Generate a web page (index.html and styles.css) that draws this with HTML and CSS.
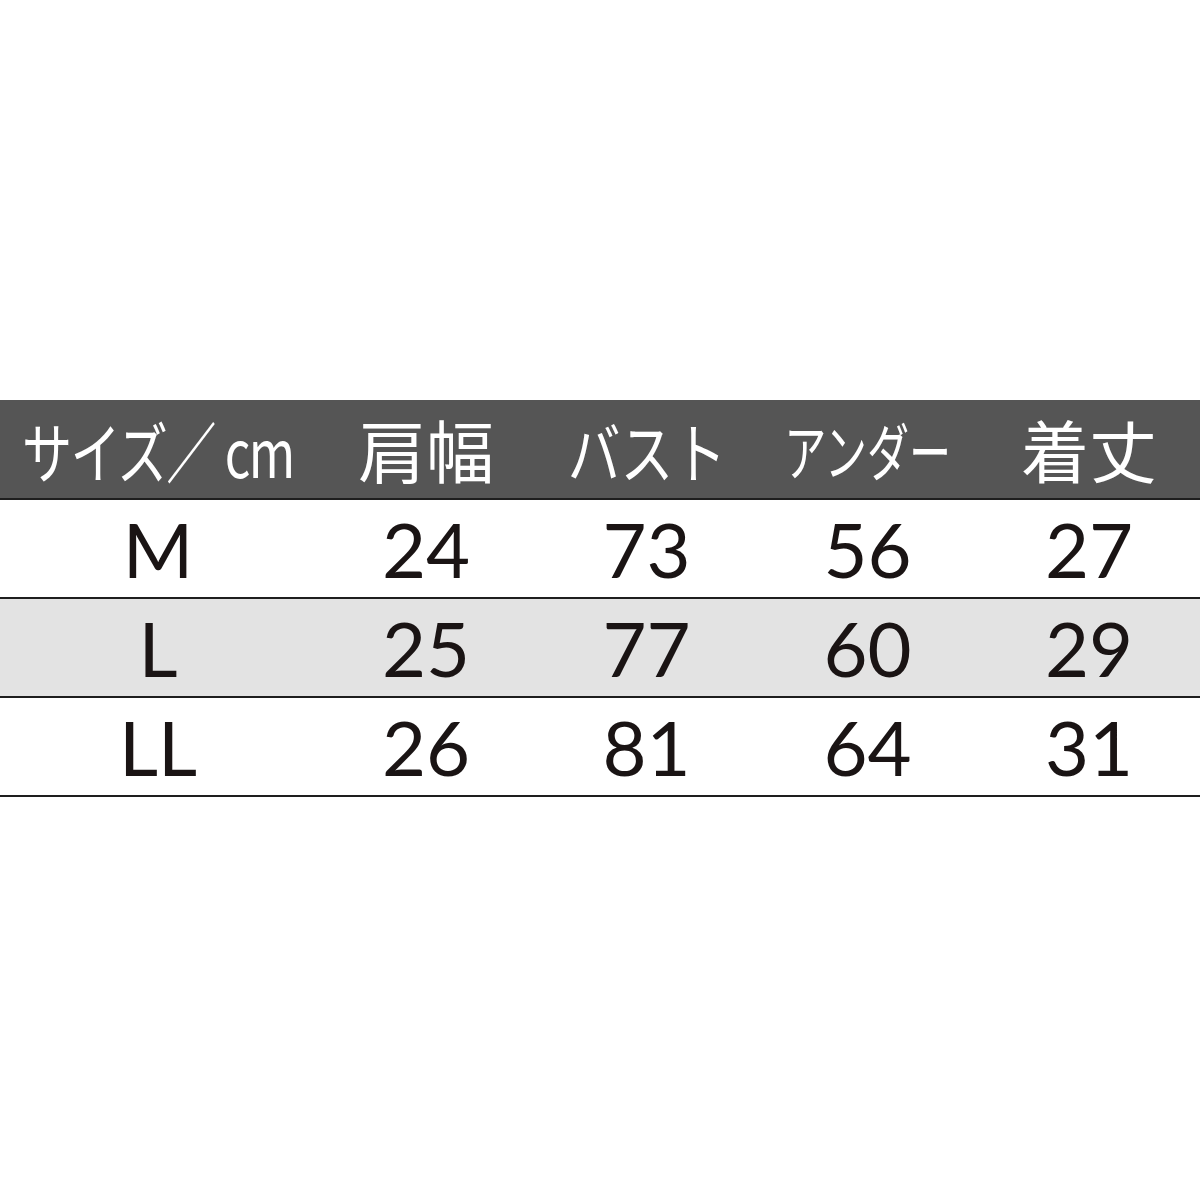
FILE: index.html
```html
<!DOCTYPE html>
<html lang="ja">
<head>
<meta charset="utf-8">
<link rel="stylesheet" href="styles.css">
</head>
<body>
<div class="page">
  <div class="table">
    <div class="row head">
      <div class="cell"><span class="h h-size">サイズ／ cm</span></div>
      <div class="cell"><span class="h h-kanji">肩幅</span></div>
      <div class="cell"><span class="h h-bust">バスト</span></div>
      <div class="cell"><span class="h h-under">アンダー</span></div>
      <div class="cell"><span class="h h-kanji">着丈</span></div>
    </div>
    <div class="row body">
      <div class="cell">M</div><div class="cell">24</div><div class="cell">73</div><div class="cell">56</div><div class="cell">27</div>
    </div>
    <div class="row body alt">
      <div class="cell">L</div><div class="cell">25</div><div class="cell">77</div><div class="cell">60</div><div class="cell">29</div>
    </div>
    <div class="row body last">
      <div class="cell">LL</div><div class="cell">26</div><div class="cell">81</div><div class="cell">64</div><div class="cell">31</div>
    </div>
  </div>
</div>
</body>
</html>
```
FILE: styles.css
```css
html, body {
  margin: 0;
  padding: 0;
  background: #ffffff;
}
.page {
  width: 1200px;
  height: 1200px;
  padding-top: 400px;
  box-sizing: border-box;
}
.table {
  display: flex;
  flex-direction: column;
}
.row {
  display: grid;
  grid-template-columns: 316px 220px 221px 221px 222px;
  align-items: center;
}
.cell {
  display: flex;
  justify-content: center;
  align-items: center;
  height: 100%;
}
.head {
  height: 98px;
  background: #555555;
  color: #ffffff;
  font-family: "Noto Sans CJK JP", sans-serif;
  font-weight: 400;
}
.h {
  display: inline-block;
  white-space: nowrap;
  line-height: 1;
}
.h-size {
  font-size: 66px;
  letter-spacing: -2px;
  transform: scaleX(0.76);
}
.h-kanji {
  font-size: 68px;
}
.h-bust {
  font-size: 66px;
  transform: scaleX(0.8);
}
.h-under {
  font-size: 62px;
  transform: scaleX(0.68);
}
.body {
  height: 97px;
  border-top: 2px solid #1e1e1e;
  color: #1a1414;
  font-family: "Lato", "Noto Sans", sans-serif;
  font-size: 76px;
  font-weight: 400;
  line-height: 1;
}
.alt {
  background: #e3e3e3;
}
.last {
  border-bottom: 2px solid #1e1e1e;
}
```
